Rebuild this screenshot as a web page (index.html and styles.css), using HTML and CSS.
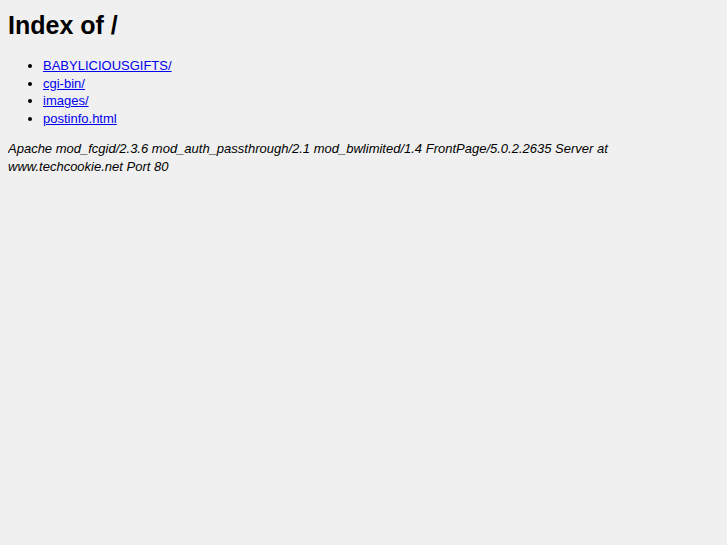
FILE: index.html
```
<!DOCTYPE html>
<html>
<head>
<meta charset="utf-8">
<title>Index of /</title>
<link rel="stylesheet" href="styles.css">
</head>
<body>
<h1 class="title">Index of /</h1>
<ul class="listing">
<li><a href="#">BABYLICIOUSGIFTS/</a></li>
<li><a href="#">cgi-bin/</a></li>
<li><a href="#">images/</a></li>
<li><a href="#">postinfo.html</a></li>
</ul>
<address class="sig">Apache mod_fcgid/2.3.6 mod_auth_passthrough/2.1 mod_bwlimited/1.4 FrontPage/5.0.2.2635 Server at www.techcookie.net Port 80</address>
</body>
</html>
```
FILE: styles.css
```
html { background: #f0f0f0; }
body {
  margin: 8px;
  font-family: "Liberation Sans", Arial, sans-serif;
  font-size: 13px;
  color: #000;
  width: 610px;
}
.title {
  font-size: 25px;
  font-weight: bold;
  line-height: 30px;
  margin: 2px 0 0 0;
}
.listing {
  margin: 17px 0 0 0;
  padding-left: 35px;
  line-height: 17.5px;
}
.listing a { color: #0000ee; }
.sig {
  font-style: italic;
  line-height: 18px;
  margin-top: 13px;
}
```
